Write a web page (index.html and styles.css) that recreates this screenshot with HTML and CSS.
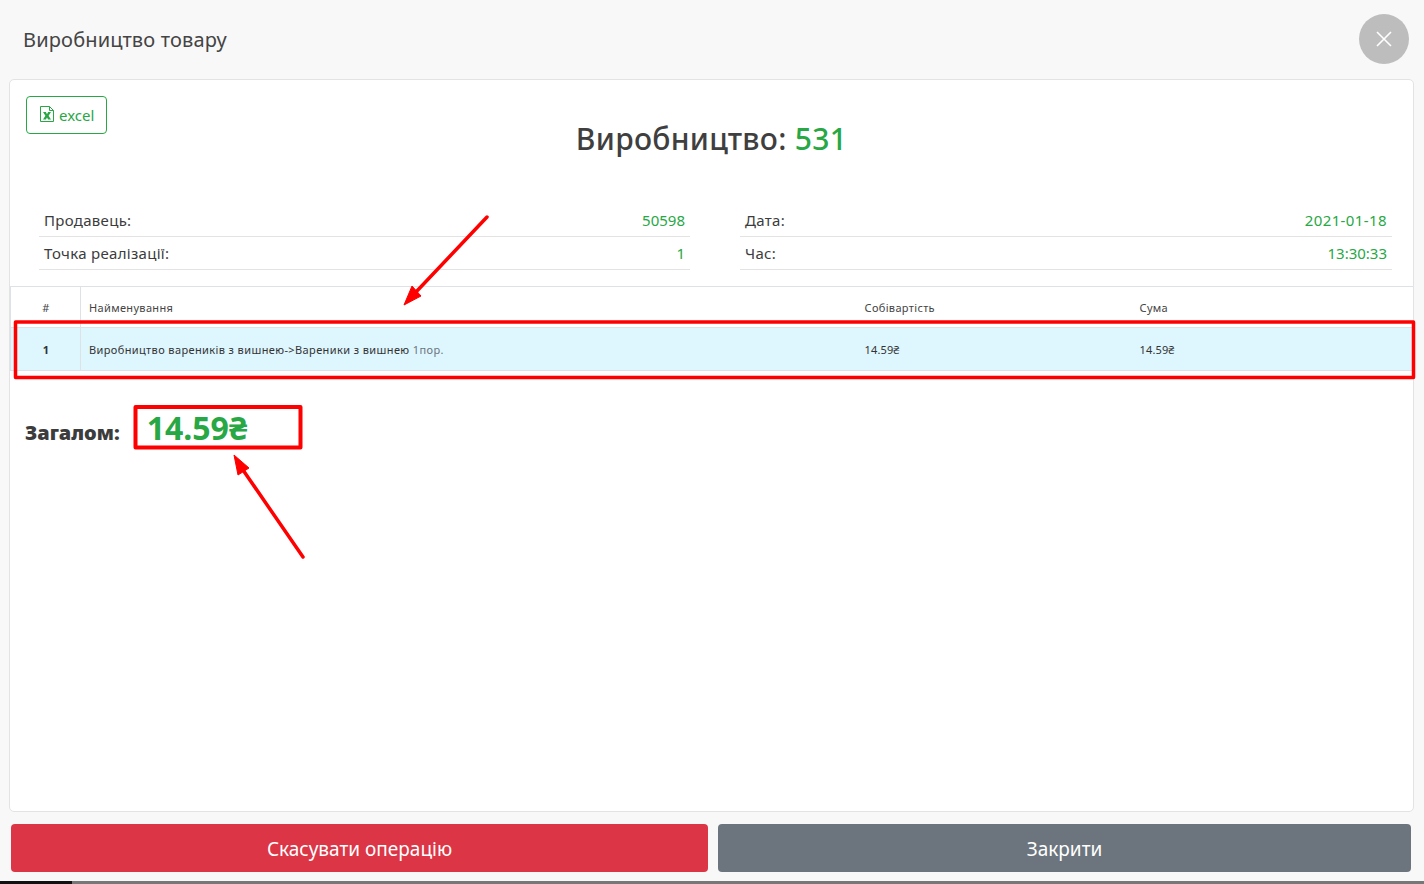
FILE: index.html
```html
<!DOCTYPE html>
<html lang="uk">
<head>
<meta charset="utf-8">
<title>Виробництво товару</title>
<link rel="stylesheet" href="styles.css">
</head>
<body>
<div class="modal">
  <header class="modal-head">
    <h1 class="modal-title">Виробництво товару</h1>
    <button class="close" aria-label="close">
      <svg width="16" height="16" viewBox="0 0 16 16"><path d="M1 1L15 15M15 1L1 15" stroke="#fff" stroke-width="1.6" fill="none"/></svg>
    </button>
  </header>
  <main class="card">
    <div class="top">
      <a class="excel">
        <svg class="excel-icon" width="14" height="16" viewBox="0 0 14 16"><path d="M.5.5H9.5L13.5 4.500V15.500H.5Z" fill="none" stroke="#28a745"/><path d="M9.500.5V4.500H13.500" fill="none" stroke="#28a745"/><path d="M3 6H5.900L7 8.200 8.100 6H11L8.600 9.800 11 13.500H8.100L7 11.400 5.900 13.500H3L5.400 9.800Z" fill="#28a745"/></svg>
        <span>excel</span>
      </a>
      <h2 class="doc-title">Виробництво: <span class="green">531</span></h2>
    </div>
    <div class="info">
      <div class="info-col">
        <div class="info-row"><span class="label">Продавець:</span><span class="green">50598</span></div>
        <div class="info-row"><span class="label">Точка реалізації:</span><span class="green">1</span></div>
      </div>
      <div class="info-col">
        <div class="info-row"><span class="label">Дата:</span><span class="green spaced">2021-01-18</span></div>
        <div class="info-row"><span class="label">Час:</span><span class="green">13:30:33</span></div>
      </div>
    </div>
    <table class="items">
      <thead>
        <tr><th class="c-num">#</th><th class="c-name">Найменування</th><th class="c-cost">Собівартість</th><th>Сума</th></tr>
      </thead>
      <tbody>
        <tr><td class="c-num"><b>1</b></td><td class="product">Виробництво вареників з вишнею-&gt;Вареники з вишнею <span class="muted">1пор.</span></td><td class="price">14.59₴</td><td class="price">14.59₴</td></tr>
      </tbody>
    </table>
    <div class="total"><span class="total-label">Загалом:</span><span class="total-value">14.59₴</span></div>
  </main>
  <footer class="actions">
    <button class="btn danger">Скасувати операцію</button>
    <button class="btn secondary">Закрити</button>
  </footer>
  <div class="taskbar"></div>
</div>
<svg class="marks" width="1424" height="884" viewBox="0 0 1424 884">
  <g fill="none" stroke="#f00" stroke-linejoin="round">
    <rect x="15.500" y="322" width="1398" height="55.500" stroke-width="3.500"/>
    <rect x="135.500" y="407" width="165" height="40.500" stroke-width="4"/>
  </g>
  <g stroke="#f00" stroke-width="3.500" stroke-linecap="round" fill="#f00">
    <path d="M487 217L416 292"/>
    <path d="M303 557L243 470"/>
  </g>
  <path d="M404 305L412 286 421 296Z" fill="#f00" stroke="#f00"/>
  <path d="M234 455L249 468 238 475Z" fill="#f00" stroke="#f00"/>
</svg>
</body>
</html>
```
FILE: styles.css
```css
* { box-sizing: border-box; }
html, body { margin: 0; height: 100%; overflow: hidden; }
body { font-family: "Noto Sans", sans-serif; color: #3c3c3c; background: #f8f8f8; }
.modal { display: flex; flex-direction: column; height: 884px; padding: 0 10px 0 9px; }
.modal-head { display: flex; align-items: center; justify-content: space-between; height: 79px; padding: 0 15px 1px 14px; flex: none; margin-right: -10px; }
.modal-title { margin: 1px 0 0; font-size: 20px; font-weight: 400; color: #444; letter-spacing: .17px; }
.close { width: 50px; height: 50px; border: 0; border-radius: 50%; background: #bdbdbd; display: flex; align-items: center; justify-content: center; padding: 0; }
.card { height: 733px; flex: none; background: #fff; border: 1px solid #e3e3e3; border-radius: 5px; }
.top { position: relative; height: 118px; padding: 16px 0 0 16px; }
.excel { display: inline-flex; align-items: center; gap: 5px; height: 38px; width: 81px; padding: 0 0 0 13px; border: 1px solid #28a745; border-radius: 4px; color: #28a745; font-size: 15px; }
.excel-icon { margin-top: -2px; }
.doc-title { position: absolute; left: 0; right: 0; top: 37px; margin: 0; text-align: center; font-size: 30px; line-height: 44px; font-weight: 500; color: #3f3f3f; letter-spacing: .3px; }
.green { color: #28a745; }
.info { display: flex; gap: 50px; padding: 6px 21px 0 29px; height: 88px; }
.info-row { display: flex; justify-content: space-between; align-items: center; height: 33px; padding: 0 5px; border-bottom: 1px solid #e3e3e3; font-size: 15px; color: #3c3c3c; }
.label { letter-spacing: .3px; }
.spaced { letter-spacing: .4px; }
.info-col:first-child { flex: 0 0 651px; }
.info-col:last-child { flex: 0 0 652px; }
.items { width: 100%; border-collapse: collapse; font-size: 11px; color: #333; border-top: 1px solid #dee2e6; table-layout: fixed; letter-spacing: .34px; }
.items th, .items td { text-align: left; font-weight: 400; padding: 0 8px; }
.items th { height: 41px; color: #444; }
.items td { height: 43px; background: #def6fe; border-top: 1px solid #dee2e6; border-bottom: 1px solid #dee2e6; }
.items .c-num { width: 70px; text-align: center; border-left: 1px solid #dee2e6; border-right: 1px solid #dee2e6; padding: 0 0 0 1px; }
.items .product { letter-spacing: .39px; }
.items .price { letter-spacing: .15px; }
.c-name { width: 776px; }
.c-cost { width: 275px; }
.items b { font-weight: 700; }
.muted { color: #6c757d; }
.total { display: flex; align-items: baseline; padding: 35px 0 0 15px; gap: 27px; }
.total-label { font-size: 20px; font-weight: 900; color: #3c3c3c; }
.total-value { font-size: 32px; font-weight: 700; color: #28a745; line-height: 44px; }
.actions { display: flex; gap: 10px; padding: 12px 3px 0 2px; flex: none; }
.btn { height: 48px; border: 0; border-radius: 4px; color: #fff; font-family: inherit; font-size: 19px; padding: 0; line-height: 50px; }
.danger { background: #dc3545; width: 697px; }
.secondary { background: #6c757d; width: 693px; }
.taskbar { position: absolute; left: 0; right: 0; bottom: 0; height: 3px; background: linear-gradient(90deg, #111 72px, #777 72px); }
.marks { position: absolute; left: 0; top: 0; pointer-events: none; }
```
